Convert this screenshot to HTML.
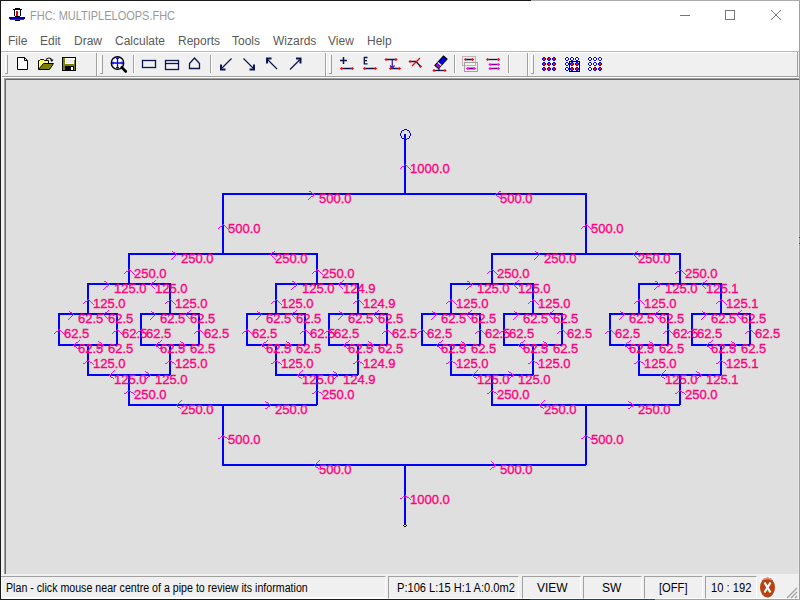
<!DOCTYPE html>
<html><head><meta charset="utf-8">
<style>
html,body{margin:0;padding:0;}
body{width:800px;height:600px;overflow:hidden;position:relative;background:#f0f0f0;font-family:"Liberation Sans",sans-serif;}
.abs{position:absolute;}
.r{position:absolute;}
#title{left:1px;top:1px;width:798px;height:29px;background:#fff;}
#title .t{position:absolute;left:29px;top:8px;font-size:12px;color:#9a9a9a;white-space:nowrap;transform:scaleX(0.915);transform-origin:0 0;}
#menu{left:1px;top:30px;width:798px;height:21px;background:#fff;}
#menu span{position:absolute;top:4px;font-size:12px;color:#5a5a5a;white-space:nowrap;}
#canvas{left:6px;top:80px;width:792px;height:494px;background:#dfdfdf;}
.st{position:absolute;font-size:12px;color:#000;white-space:nowrap;top:581px;transform-origin:0 0;}
</style></head><body>
<!-- window borders -->
<div class="r" style="left:0;top:0;width:531px;height:1px;background:#1a1a1a"></div>
<div class="r" style="left:531px;top:0;width:269px;height:1px;background:#aaaaaa"></div>
<div class="r" style="left:0;top:0;width:1px;height:600px;background:#1a1a1a"></div>
<div class="r" style="left:799px;top:1px;width:1px;height:599px;background:#a0a0a0"></div>

<div id="title" class="r">
  <svg class="abs" style="left:-1px;top:-1px" width="30" height="30" viewBox="0 0 30 30" shape-rendering="crispEdges">
    <rect x="15" y="8" width="5" height="1" fill="#000"/>
    <rect x="13" y="9" width="9" height="1" fill="#000"/>
    <rect x="14" y="10" width="7" height="6" fill="#fff"/>
    <rect x="14" y="10" width="1" height="6" fill="#000"/>
    <rect x="20" y="10" width="1" height="6" fill="#000"/>
    <rect x="16" y="11" width="2" height="5" fill="#e00000"/>
    <rect x="15" y="16" width="5" height="1" fill="#000"/>
    <rect x="9" y="17" width="16" height="2" fill="#0000c0"/>
    <rect x="10" y="19" width="14" height="1" fill="#3030c0"/>
    <rect x="15" y="20" width="5" height="1" fill="#000"/>
  </svg>
  <div class="t">FHC: MULTIPLELOOPS.FHC</div>
  <svg class="abs" style="left:670px;top:0" width="128" height="29" viewBox="671 1 128 29">
    <rect x="680" y="15" width="10" height="1" fill="#767676"/>
    <rect x="725.5" y="10.5" width="9" height="9" fill="none" stroke="#767676" stroke-width="1"/>
    <path d="M771 10L781 20M781 10L771 20" stroke="#767676" stroke-width="1"/>
  </svg>
</div>

<div id="menu" class="r">
  <span style="left:7px">File</span>
  <span style="left:39px">Edit</span>
  <span style="left:73px">Draw</span>
  <span style="left:114px">Calculate</span>
  <span style="left:177px">Reports</span>
  <span style="left:231px">Tools</span>
  <span style="left:272px">Wizards</span>
  <span style="left:327px">View</span>
  <span style="left:366px">Help</span>
</div>

<!-- toolbar band -->
<div class="r" style="left:1px;top:51px;width:798px;height:1px;background:#b9b9b9"></div>
<div class="r" style="left:1px;top:52px;width:798px;height:1px;background:#ffffff"></div>
<div class="r" style="left:1px;top:53px;width:798px;height:23px;background:#f0f0f0"></div>
<div class="r" style="left:1px;top:76px;width:798px;height:1px;background:#a0a0a0"></div>
<div class="r" style="left:1px;top:77px;width:798px;height:1px;background:#ffffff"></div>
<div class="r" style="left:1px;top:52px;width:1px;height:25px;background:#ffffff"></div>
<div class="r" style="left:797px;top:52px;width:1px;height:25px;background:#a0a0a0"></div>

<svg class="abs" style="left:0;top:50px" width="800" height="28" viewBox="0 50 800 28" shape-rendering="crispEdges">
  <g fill="#a0a0a0">
    <rect x="7" y="55" width="1" height="19"/><rect x="5" y="73" width="3" height="1"/>
    <rect x="96" y="53" width="1" height="23"/>
    <rect x="102" y="55" width="1" height="19"/><rect x="100" y="73" width="3" height="1"/>
    <rect x="133" y="55" width="1" height="18"/>
    <rect x="210" y="55" width="1" height="18"/>
    <rect x="325" y="53" width="1" height="23"/>
    <rect x="331" y="55" width="1" height="19"/><rect x="329" y="73" width="3" height="1"/>
    <rect x="454" y="55" width="1" height="18"/>
    <rect x="508" y="55" width="1" height="18"/>
    <rect x="527" y="53" width="1" height="23"/>
    <rect x="533" y="55" width="1" height="19"/><rect x="531" y="73" width="3" height="1"/>
  </g>
  <g fill="#ffffff">
    <rect x="5" y="55" width="1" height="18"/>
    <rect x="97" y="53" width="1" height="23"/>
    <rect x="100" y="55" width="1" height="18"/>
    <rect x="134" y="55" width="1" height="18"/>
    <rect x="211" y="55" width="1" height="18"/>
    <rect x="326" y="53" width="1" height="23"/>
    <rect x="329" y="55" width="1" height="18"/>
    <rect x="455" y="55" width="1" height="18"/>
    <rect x="509" y="55" width="1" height="18"/>
    <rect x="528" y="53" width="1" height="23"/>
    <rect x="531" y="55" width="1" height="18"/>
  </g>
</svg>
<svg class="abs" style="left:0;top:50px" width="800" height="28" viewBox="0 50 800 28">
  <!-- new -->
  <path d="M17.5 57.5h7l3 3v9h-10z" fill="#fff" stroke="#000"/>
  <path d="M24.5 57.5v3h3" fill="none" stroke="#000"/>
  <!-- open -->
  <path d="M38.5 69.5v-9h1l1-1h3l1 1h4v3" fill="#ffff60" stroke="#000"/>
  <path d="M38.5 69.5l5-6h10l-4 6z" fill="#808000" stroke="#000"/>
  <path d="M46 59.5q3-3 5.5 0" fill="none" stroke="#000" stroke-width="1.2"/>
  <path d="M50 59.5h3.5l-1.7 2.5z" fill="#000"/>
  <!-- save -->
  <rect x="62.5" y="57.5" width="13" height="13" fill="#808000" stroke="#000"/>
  <rect x="65" y="58" width="9" height="6" fill="#fff"/>
  <rect x="66" y="59" width="7" height="4" fill="#ececec"/>
  <rect x="65" y="66" width="9" height="4" fill="#000"/>
  <rect x="71" y="67" width="2" height="3" fill="#fff"/>
  <rect x="74" y="58" width="1" height="2" fill="#fff"/>
  <!-- zoom -->
  <circle cx="117.5" cy="63" r="6.2" fill="#fff" stroke="#000" stroke-width="1.4"/>
  <path d="M117.5 57.5v11M112 63h11" stroke="#0000e0" stroke-width="1.3"/>
  <path d="M116 58.5h3M116 67.5h3M113 61.5v3M122 61.5v3" stroke="#0000e0" stroke-width="1"/>
  <path d="M121.8 67.3l4 4.2" stroke="#000" stroke-width="2.6" stroke-linecap="round"/>
  <!-- rects / house -->
  <g fill="none" stroke="#0a1650" stroke-width="1.3">
    <rect x="142.5" y="60.5" width="13" height="7"/>
    <rect x="165.5" y="60.5" width="13" height="9"/>
    <path d="M165.5 63.5h13"/>
    <path d="M189.5 68.5v-5l5-5.5 5 5.5v5z"/>
  </g>
  <!-- diagonal arrows -->
  <g stroke="#0a1650" stroke-width="1.2" fill="none">
    <path d="M231.5 58.5L221 69M243.5 58.5L254 69M266.5 58.5L277 69M290 69.5L301 58.5"/>
  </g>
  <g stroke="#0a1650" stroke-width="2" fill="none">
    <path d="M221 64.5v5h4.5M254 64.5v5h-4.5M267 63.5v-5h4.5M300.5 63.5v-5h-4.5"/>
  </g>
  <!-- plus / E -->
  <path d="M343.5 57v7M340 60.5h7" stroke="#0a1650" stroke-width="1.5"/>
  <path d="M341 68.5h11M364 68.5h11" stroke="#0a1650" stroke-width="1.3"/>
  <path d="M364 57.5h3.5M364 60.7h3M364 63.8h3.5M364.3 57v7.5" stroke="#0a1650" stroke-width="1.3" fill="none"/>
  <path d="M341.5 66.9l1.6 1.6-1.6 1.6-1.6-1.6z" fill="#ff0000"/><path d="M352.5 66.9l1.6 1.6-1.6 1.6-1.6-1.6z" fill="#ff0000"/><path d="M364.5 66.9l1.6 1.6-1.6 1.6-1.6-1.6z" fill="#ff0000"/><path d="M375.5 66.9l1.6 1.6-1.6 1.6-1.6-1.6z" fill="#ff0000"/>
  <!-- T icon -->
  <path d="M386 59.5h10M390.5 68.5h9" stroke="#0a1650" stroke-width="1.3"/>
  <path d="M392.3 60v8M390 65.5l2.3 2.5 2.3-2.5" stroke="#5020a0" stroke-width="1.3" fill="none"/>
  <path d="M386 57.9l1.6 1.6-1.6 1.6-1.6-1.6z" fill="#ff0000"/><path d="M396 57.9l1.6 1.6-1.6 1.6-1.6-1.6z" fill="#ff0000"/><path d="M390.5 66.9l1.6 1.6-1.6 1.6-1.6-1.6z" fill="#ff0000"/><path d="M399.5 66.9l1.6 1.6-1.6 1.6-1.6-1.6z" fill="#ff0000"/>
  <!-- X line -->
  <path d="M410 61.5h6l4.5 5" stroke="#0a1650" stroke-width="1.3" fill="none"/>
  <path d="M412 66l8-8" stroke="#ff0000" stroke-width="1.2"/>
  <path d="M410 59.9l1.6 1.6-1.6 1.6-1.6-1.6z" fill="#ff0000"/><path d="M420.5 64.9l1.6 1.6-1.6 1.6-1.6-1.6z" fill="#ff0000"/>
  <!-- eraser -->
  <path d="M435 65.5l8.5-9.5 3.5 3-8.5 9.5z" fill="#0000ff" stroke="#000" stroke-width="1.2"/>
  <path d="M437.8 62.5l3.5 3" stroke="#e8e8e8" stroke-width="1.6"/>
  <path d="M435.6 65.3l1.6-1.8 3.2 2.9-1.6 1.8z" fill="#c000c0"/>
  <path d="M439 68.5v2" stroke="#000" stroke-width="1.2"/>
  <path d="M434 70.5h11" stroke="#0a1650" stroke-width="1.3"/>
  <path d="M434 68.9l1.6 1.6-1.6 1.6-1.6-1.6z" fill="#ff0000"/><path d="M445 68.9l1.6 1.6-1.6 1.6-1.6-1.6z" fill="#ff0000"/>
  <!-- two rect icon -->
  <rect x="462.5" y="56.5" width="13" height="9" fill="none" stroke="#a07080" stroke-width="1" stroke-dasharray="1 1"/>
  <rect x="464.5" y="62.5" width="13" height="9" fill="none" stroke="#a0a0a0" stroke-width="1"/>
  <path d="M466 59.5h6M468 68.5h6" stroke="#0a1650" stroke-width="1.3"/>
  <path d="M468 68.5h6" stroke="#800080" stroke-width="1.3"/>
  <path d="M465.5 57.9l1.6 1.6-1.6 1.6-1.6-1.6z" fill="#ff0000"/><path d="M472.5 57.9l1.6 1.6-1.6 1.6-1.6-1.6z" fill="#ff0000"/><path d="M467.5 66.9l1.6 1.6-1.6 1.6-1.6-1.6z" fill="#ff00ff"/><path d="M474.5 66.9l1.6 1.6-1.6 1.6-1.6-1.6z" fill="#ff00ff"/>
  <!-- lines icon -->
  <path d="M488 59.5h10" stroke="#0a1650" stroke-width="1.3"/>
  <path d="M490 64.5h8M490 68.5h8" stroke="#800080" stroke-width="1.3"/>
  <path d="M487.5 57.9l1.6 1.6-1.6 1.6-1.6-1.6z" fill="#ff0000"/><path d="M498.5 57.9l1.6 1.6-1.6 1.6-1.6-1.6z" fill="#ff0000"/><path d="M490 62.9l1.6 1.6-1.6 1.6-1.6-1.6z" fill="#ff00ff"/><path d="M498.5 62.9l1.6 1.6-1.6 1.6-1.6-1.6z" fill="#ff00ff"/><path d="M490 66.9l1.6 1.6-1.6 1.6-1.6-1.6z" fill="#ff00ff"/><path d="M498.5 66.9l1.6 1.6-1.6 1.6-1.6-1.6z" fill="#ff00ff"/>
</svg>
<svg class="abs" style="left:0;top:50px" width="800" height="28" viewBox="0 50 800 28" shape-rendering="crispEdges">
  <path d="M543 57h2v1h1v2h-1v1h-2v-1h-1v-2h1z" fill="#0000ff"/><rect x="543" y="58" width="2" height="2" fill="#ff0000"/><path d="M548 57h2v1h1v2h-1v1h-2v-1h-1v-2h1z" fill="#0000ff"/><rect x="548" y="58" width="2" height="2" fill="#ff0000"/><path d="M553 57h2v1h1v2h-1v1h-2v-1h-1v-2h1z" fill="#0000ff"/><rect x="553" y="58" width="2" height="2" fill="#ff0000"/><path d="M543 62h2v1h1v2h-1v1h-2v-1h-1v-2h1z" fill="#0000ff"/><rect x="543" y="63" width="2" height="2" fill="#ff0000"/><path d="M548 62h2v1h1v2h-1v1h-2v-1h-1v-2h1z" fill="#0000ff"/><rect x="548" y="63" width="2" height="2" fill="#ff0000"/><path d="M553 62h2v1h1v2h-1v1h-2v-1h-1v-2h1z" fill="#0000ff"/><rect x="553" y="63" width="2" height="2" fill="#ff0000"/><path d="M543 67h2v1h1v2h-1v1h-2v-1h-1v-2h1z" fill="#0000ff"/><rect x="543" y="68" width="2" height="2" fill="#ff0000"/><path d="M548 67h2v1h1v2h-1v1h-2v-1h-1v-2h1z" fill="#0000ff"/><rect x="548" y="68" width="2" height="2" fill="#ff0000"/><path d="M553 67h2v1h1v2h-1v1h-2v-1h-1v-2h1z" fill="#0000ff"/><rect x="553" y="68" width="2" height="2" fill="#ff0000"/>
  <path d="M566 57h2v1h1v2h-1v1h-2v-1h-1v-2h1z" fill="#0000ff"/><rect x="566" y="58" width="2" height="2" fill="#ffffff"/><path d="M571 57h2v1h1v2h-1v1h-2v-1h-1v-2h1z" fill="#0000ff"/><rect x="571" y="58" width="2" height="2" fill="#ffffff"/><path d="M576 57h2v1h1v2h-1v1h-2v-1h-1v-2h1z" fill="#0000ff"/><rect x="576" y="58" width="2" height="2" fill="#ffffff"/><path d="M566 62h2v1h1v2h-1v1h-2v-1h-1v-2h1z" fill="#0000ff"/><rect x="566" y="63" width="2" height="2" fill="#ffffff"/><path d="M571 62h2v1h1v2h-1v1h-2v-1h-1v-2h1z" fill="#0000ff"/><rect x="571" y="63" width="2" height="2" fill="#ff0000"/><path d="M576 62h2v1h1v2h-1v1h-2v-1h-1v-2h1z" fill="#0000ff"/><rect x="576" y="63" width="2" height="2" fill="#ff0000"/><path d="M566 67h2v1h1v2h-1v1h-2v-1h-1v-2h1z" fill="#0000ff"/><rect x="566" y="68" width="2" height="2" fill="#ffffff"/><path d="M571 67h2v1h1v2h-1v1h-2v-1h-1v-2h1z" fill="#0000ff"/><rect x="571" y="68" width="2" height="2" fill="#ff0000"/><path d="M576 67h2v1h1v2h-1v1h-2v-1h-1v-2h1z" fill="#0000ff"/><rect x="576" y="68" width="2" height="2" fill="#ff0000"/>
  <rect x="569.5" y="61.5" width="10" height="10" fill="none" stroke="#000" stroke-width="1.4"/>
  <path d="M589 57h2v1h1v2h-1v1h-2v-1h-1v-2h1z" fill="#0000ff"/><rect x="589" y="58" width="2" height="2" fill="#ffffff"/><path d="M594 57h2v1h1v2h-1v1h-2v-1h-1v-2h1z" fill="#0000ff"/><rect x="594" y="58" width="2" height="2" fill="#ffffff"/><path d="M599 57h2v1h1v2h-1v1h-2v-1h-1v-2h1z" fill="#0000ff"/><rect x="599" y="58" width="2" height="2" fill="#ffffff"/><path d="M589 62h2v1h1v2h-1v1h-2v-1h-1v-2h1z" fill="#0000ff"/><rect x="589" y="63" width="2" height="2" fill="#ffffff"/><path d="M594 62h2v1h1v2h-1v1h-2v-1h-1v-2h1z" fill="#0000ff"/><rect x="594" y="63" width="2" height="2" fill="#ffffff"/><path d="M599 62h2v1h1v2h-1v1h-2v-1h-1v-2h1z" fill="#0000ff"/><rect x="599" y="63" width="2" height="2" fill="#ff0000"/><path d="M589 67h2v1h1v2h-1v1h-2v-1h-1v-2h1z" fill="#0000ff"/><rect x="589" y="68" width="2" height="2" fill="#ffffff"/><path d="M594 67h2v1h1v2h-1v1h-2v-1h-1v-2h1z" fill="#0000ff"/><rect x="594" y="68" width="2" height="2" fill="#ff0000"/><path d="M599 67h2v1h1v2h-1v1h-2v-1h-1v-2h1z" fill="#0000ff"/><rect x="599" y="68" width="2" height="2" fill="#ff0000"/>
</svg>

<!-- canvas frame -->
<div class="r" style="left:4px;top:78px;width:795px;height:1px;background:#a0a0a0"></div>
<div class="r" style="left:4px;top:78px;width:1px;height:497px;background:#a0a0a0"></div>
<div class="r" style="left:5px;top:79px;width:794px;height:1px;background:#696969"></div>
<div class="r" style="left:5px;top:79px;width:1px;height:495px;background:#696969"></div>
<div id="canvas" class="r"></div>
<div class="r" style="left:798px;top:80px;width:1px;height:494px;background:#e8e8e8"></div><div class="r" style="left:799px;top:237px;width:1px;height:1px;background:#2a4a70"></div><div class="r" style="left:799px;top:243px;width:1px;height:1px;background:#2a4a70"></div>

<svg class="abs" style="left:0;top:0" width="800" height="600" viewBox="0 0 800 600"><g fill="#0000ff"><rect x="404" y="134" width="2" height="60"/><rect x="222" y="193" width="364" height="2"/><rect x="222" y="193" width="2" height="61"/><rect x="585" y="193" width="2" height="61"/><rect x="128" y="253" width="189" height="2"/><rect x="491" y="253" width="189" height="2"/><rect x="404" y="464" width="2" height="61"/><rect x="222" y="464" width="364" height="2"/><rect x="222" y="404" width="2" height="61"/><rect x="585" y="404" width="2" height="61"/><rect x="128" y="404" width="189" height="2"/><rect x="491" y="404" width="189" height="2"/><rect x="128" y="253" width="2" height="31"/><rect x="128" y="374" width="2" height="31"/><rect x="87" y="283" width="83" height="2"/><rect x="87" y="374" width="83" height="2"/><rect x="87" y="283" width="2" height="31"/><rect x="87" y="344" width="2" height="31"/><rect x="58" y="313" width="59" height="2"/><rect x="58" y="344" width="59" height="2"/><rect x="58" y="313" width="2" height="32"/><rect x="116" y="313" width="2" height="32"/><rect x="169" y="283" width="2" height="31"/><rect x="169" y="344" width="2" height="31"/><rect x="140" y="313" width="59" height="2"/><rect x="140" y="344" width="59" height="2"/><rect x="140" y="313" width="2" height="32"/><rect x="198" y="313" width="2" height="32"/><rect x="316" y="253" width="2" height="31"/><rect x="316" y="374" width="2" height="31"/><rect x="275" y="283" width="83" height="2"/><rect x="275" y="374" width="83" height="2"/><rect x="275" y="283" width="2" height="31"/><rect x="275" y="344" width="2" height="31"/><rect x="246" y="313" width="59" height="2"/><rect x="246" y="344" width="59" height="2"/><rect x="246" y="313" width="2" height="32"/><rect x="304" y="313" width="2" height="32"/><rect x="357" y="283" width="2" height="31"/><rect x="357" y="344" width="2" height="31"/><rect x="328" y="313" width="59" height="2"/><rect x="328" y="344" width="59" height="2"/><rect x="328" y="313" width="2" height="32"/><rect x="386" y="313" width="2" height="32"/><rect x="491" y="253" width="2" height="31"/><rect x="491" y="374" width="2" height="31"/><rect x="450" y="283" width="83" height="2"/><rect x="450" y="374" width="83" height="2"/><rect x="450" y="283" width="2" height="31"/><rect x="450" y="344" width="2" height="31"/><rect x="421" y="313" width="59" height="2"/><rect x="421" y="344" width="59" height="2"/><rect x="421" y="313" width="2" height="32"/><rect x="479" y="313" width="2" height="32"/><rect x="532" y="283" width="2" height="31"/><rect x="532" y="344" width="2" height="31"/><rect x="503" y="313" width="59" height="2"/><rect x="503" y="344" width="59" height="2"/><rect x="503" y="313" width="2" height="32"/><rect x="561" y="313" width="2" height="32"/><rect x="679" y="253" width="2" height="31"/><rect x="679" y="374" width="2" height="31"/><rect x="638" y="283" width="83" height="2"/><rect x="638" y="374" width="83" height="2"/><rect x="638" y="283" width="2" height="31"/><rect x="638" y="344" width="2" height="31"/><rect x="609" y="313" width="59" height="2"/><rect x="609" y="344" width="59" height="2"/><rect x="609" y="313" width="2" height="32"/><rect x="667" y="313" width="2" height="32"/><rect x="720" y="283" width="2" height="31"/><rect x="720" y="344" width="2" height="31"/><rect x="691" y="313" width="59" height="2"/><rect x="691" y="344" width="59" height="2"/><rect x="691" y="313" width="2" height="32"/><rect x="749" y="313" width="2" height="32"/></g><path fill="#0000ff" d="M404 129h1v1h-1zM405 129h1v1h-1zM406 129h1v1h-1zM402 130h1v1h-1zM403 130h1v1h-1zM407 130h1v1h-1zM408 130h1v1h-1zM401 131h1v1h-1zM409 131h1v1h-1zM401 132h1v1h-1zM409 132h1v1h-1zM400 133h1v1h-1zM410 133h1v1h-1zM400 134h1v1h-1zM410 134h1v1h-1zM400 135h1v1h-1zM410 135h1v1h-1zM401 136h1v1h-1zM409 136h1v1h-1zM401 137h1v1h-1zM409 137h1v1h-1zM402 138h1v1h-1zM403 138h1v1h-1zM407 138h1v1h-1zM408 138h1v1h-1zM404 139h1v1h-1zM405 139h1v1h-1zM406 139h1v1h-1z"/><path fill="#000" d="M404 524h2v1h-2zM403 525h1v1h-1zM406 525h1v1h-1zM404 526h2v1h-2z"/><path fill="#ff00ff" d="M405 164h1v1h-1zM404 165h1v1h-1zM406 165h1v1h-1zM402 166h1v1h-1zM403 166h1v1h-1zM407 166h1v1h-1zM401 167h1v1h-1zM408 167h1v1h-1zM400 168h1v1h-1zM409 168h1v1h-1zM410 169h1v1h-1zM309 191h1v1h-1zM310 191h1v1h-1zM311 192h1v1h-1zM312 193h1v1h-1zM313 193h1v1h-1zM314 194h1v1h-1zM313 195h1v1h-1zM311 196h1v1h-1zM312 196h1v1h-1zM310 197h1v1h-1zM309 198h1v1h-1zM308 199h1v1h-1zM500 191h1v1h-1zM499 191h1v1h-1zM498 192h1v1h-1zM497 193h1v1h-1zM496 193h1v1h-1zM495 194h1v1h-1zM496 195h1v1h-1zM498 196h1v1h-1zM497 196h1v1h-1zM499 197h1v1h-1zM500 198h1v1h-1zM501 199h1v1h-1zM223 224h1v1h-1zM222 225h1v1h-1zM224 225h1v1h-1zM220 226h1v1h-1zM221 226h1v1h-1zM225 226h1v1h-1zM219 227h1v1h-1zM226 227h1v1h-1zM218 228h1v1h-1zM227 228h1v1h-1zM228 229h1v1h-1zM586 224h1v1h-1zM585 225h1v1h-1zM587 225h1v1h-1zM583 226h1v1h-1zM584 226h1v1h-1zM588 226h1v1h-1zM582 227h1v1h-1zM589 227h1v1h-1zM581 228h1v1h-1zM590 228h1v1h-1zM591 229h1v1h-1zM172 251h1v1h-1zM173 252h1v1h-1zM174 252h1v1h-1zM175 253h1v1h-1zM176 254h1v1h-1zM175 255h1v1h-1zM174 256h1v1h-1zM173 257h1v1h-1zM172 258h1v1h-1zM171 259h1v1h-1zM274 251h1v1h-1zM272 252h1v1h-1zM273 252h1v1h-1zM271 253h1v1h-1zM270 254h1v1h-1zM271 255h1v1h-1zM272 256h1v1h-1zM273 257h1v1h-1zM274 258h1v1h-1zM275 259h1v1h-1zM535 251h1v1h-1zM536 252h1v1h-1zM537 252h1v1h-1zM538 253h1v1h-1zM539 254h1v1h-1zM538 255h1v1h-1zM537 256h1v1h-1zM536 257h1v1h-1zM535 258h1v1h-1zM534 259h1v1h-1zM637 251h1v1h-1zM635 252h1v1h-1zM636 252h1v1h-1zM634 253h1v1h-1zM633 254h1v1h-1zM634 255h1v1h-1zM635 256h1v1h-1zM636 257h1v1h-1zM637 258h1v1h-1zM638 259h1v1h-1zM405 495h1v1h-1zM403 496h1v1h-1zM404 496h1v1h-1zM406 496h1v1h-1zM402 497h1v1h-1zM407 497h1v1h-1zM408 497h1v1h-1zM400 498h1v1h-1zM401 498h1v1h-1zM409 498h1v1h-1zM410 499h1v1h-1zM314 465h1v1h-1zM315 464h1v1h-1zM316 463h1v1h-1zM317 462h1v1h-1zM318 461h1v1h-1zM319 460h1v1h-1zM315 466h1v1h-1zM316 467h1v1h-1zM317 467h1v1h-1zM318 468h1v1h-1zM491 461h1v1h-1zM492 462h1v1h-1zM493 463h1v1h-1zM494 464h1v1h-1zM495 465h1v1h-1zM494 466h1v1h-1zM492 467h1v1h-1zM493 467h1v1h-1zM491 468h1v1h-1zM490 469h1v1h-1zM223 435h1v1h-1zM221 436h1v1h-1zM222 436h1v1h-1zM224 436h1v1h-1zM220 437h1v1h-1zM225 437h1v1h-1zM226 437h1v1h-1zM218 438h1v1h-1zM219 438h1v1h-1zM227 438h1v1h-1zM228 439h1v1h-1zM586 435h1v1h-1zM584 436h1v1h-1zM585 436h1v1h-1zM587 436h1v1h-1zM583 437h1v1h-1zM588 437h1v1h-1zM589 437h1v1h-1zM581 438h1v1h-1zM582 438h1v1h-1zM590 438h1v1h-1zM591 439h1v1h-1zM176 405h1v1h-1zM177 404h1v1h-1zM178 403h1v1h-1zM179 402h1v1h-1zM180 401h1v1h-1zM181 400h1v1h-1zM177 406h1v1h-1zM178 407h1v1h-1zM179 407h1v1h-1zM180 408h1v1h-1zM270 405h1v1h-1zM269 404h1v1h-1zM268 403h1v1h-1zM267 402h1v1h-1zM266 402h1v1h-1zM265 401h1v1h-1zM269 406h1v1h-1zM268 406h1v1h-1zM267 407h1v1h-1zM266 408h1v1h-1zM265 408h1v1h-1zM539 405h1v1h-1zM540 404h1v1h-1zM541 403h1v1h-1zM542 402h1v1h-1zM543 401h1v1h-1zM544 400h1v1h-1zM540 406h1v1h-1zM541 407h1v1h-1zM542 407h1v1h-1zM543 408h1v1h-1zM633 405h1v1h-1zM632 404h1v1h-1zM631 403h1v1h-1zM630 402h1v1h-1zM629 402h1v1h-1zM628 401h1v1h-1zM632 406h1v1h-1zM631 406h1v1h-1zM630 407h1v1h-1zM629 408h1v1h-1zM628 408h1v1h-1zM129 269h1v1h-1zM128 270h1v1h-1zM130 270h1v1h-1zM126 271h1v1h-1zM127 271h1v1h-1zM131 271h1v1h-1zM125 272h1v1h-1zM132 272h1v1h-1zM124 273h1v1h-1zM133 273h1v1h-1zM134 274h1v1h-1zM129 390h1v1h-1zM127 391h1v1h-1zM128 391h1v1h-1zM130 391h1v1h-1zM126 392h1v1h-1zM131 392h1v1h-1zM132 392h1v1h-1zM124 393h1v1h-1zM125 393h1v1h-1zM133 393h1v1h-1zM134 394h1v1h-1zM104 281h1v1h-1zM105 281h1v1h-1zM106 282h1v1h-1zM107 283h1v1h-1zM108 283h1v1h-1zM109 284h1v1h-1zM108 285h1v1h-1zM106 286h1v1h-1zM107 286h1v1h-1zM105 287h1v1h-1zM104 288h1v1h-1zM103 289h1v1h-1zM150 284h1v1h-1zM151 283h1v1h-1zM152 282h1v1h-1zM153 282h1v1h-1zM154 281h1v1h-1zM155 280h1v1h-1zM151 285h1v1h-1zM152 286h1v1h-1zM153 287h1v1h-1zM154 288h1v1h-1zM109 375h1v1h-1zM110 374h1v1h-1zM111 373h1v1h-1zM112 372h1v1h-1zM113 371h1v1h-1zM114 370h1v1h-1zM110 376h1v1h-1zM111 377h1v1h-1zM112 377h1v1h-1zM113 378h1v1h-1zM150 375h1v1h-1zM149 374h1v1h-1zM148 373h1v1h-1zM147 372h1v1h-1zM146 372h1v1h-1zM145 371h1v1h-1zM149 376h1v1h-1zM148 376h1v1h-1zM147 377h1v1h-1zM146 378h1v1h-1zM145 378h1v1h-1zM88 299h1v1h-1zM87 300h1v1h-1zM89 300h1v1h-1zM85 301h1v1h-1zM86 301h1v1h-1zM90 301h1v1h-1zM84 302h1v1h-1zM91 302h1v1h-1zM83 303h1v1h-1zM92 303h1v1h-1zM93 304h1v1h-1zM88 360h1v1h-1zM86 361h1v1h-1zM87 361h1v1h-1zM89 361h1v1h-1zM85 362h1v1h-1zM90 362h1v1h-1zM91 362h1v1h-1zM83 363h1v1h-1zM84 363h1v1h-1zM92 363h1v1h-1zM93 364h1v1h-1zM69 311h1v1h-1zM70 312h1v1h-1zM71 312h1v1h-1zM72 313h1v1h-1zM73 314h1v1h-1zM72 315h1v1h-1zM71 316h1v1h-1zM70 317h1v1h-1zM69 318h1v1h-1zM68 319h1v1h-1zM103 314h1v1h-1zM104 313h1v1h-1zM105 312h1v1h-1zM106 312h1v1h-1zM107 311h1v1h-1zM108 310h1v1h-1zM104 315h1v1h-1zM105 316h1v1h-1zM106 317h1v1h-1zM107 318h1v1h-1zM74 344h1v1h-1zM75 343h1v1h-1zM76 342h1v1h-1zM77 342h1v1h-1zM78 341h1v1h-1zM79 340h1v1h-1zM73 345h1v1h-1zM74 346h1v1h-1zM75 346h1v1h-1zM76 347h1v1h-1zM77 348h1v1h-1zM78 348h1v1h-1zM103 345h1v1h-1zM102 344h1v1h-1zM101 343h1v1h-1zM100 342h1v1h-1zM99 342h1v1h-1zM98 341h1v1h-1zM102 346h1v1h-1zM101 346h1v1h-1zM100 347h1v1h-1zM99 348h1v1h-1zM98 348h1v1h-1zM59 329h1v1h-1zM58 330h1v1h-1zM60 330h1v1h-1zM56 331h1v1h-1zM57 331h1v1h-1zM61 331h1v1h-1zM55 332h1v1h-1zM62 332h1v1h-1zM54 333h1v1h-1zM63 333h1v1h-1zM64 334h1v1h-1zM117 329h1v1h-1zM116 330h1v1h-1zM118 330h1v1h-1zM114 331h1v1h-1zM115 331h1v1h-1zM119 331h1v1h-1zM113 332h1v1h-1zM120 332h1v1h-1zM112 333h1v1h-1zM121 333h1v1h-1zM122 334h1v1h-1zM170 299h1v1h-1zM169 300h1v1h-1zM171 300h1v1h-1zM167 301h1v1h-1zM168 301h1v1h-1zM172 301h1v1h-1zM166 302h1v1h-1zM173 302h1v1h-1zM165 303h1v1h-1zM174 303h1v1h-1zM175 304h1v1h-1zM170 360h1v1h-1zM168 361h1v1h-1zM169 361h1v1h-1zM171 361h1v1h-1zM167 362h1v1h-1zM172 362h1v1h-1zM173 362h1v1h-1zM165 363h1v1h-1zM166 363h1v1h-1zM174 363h1v1h-1zM175 364h1v1h-1zM151 311h1v1h-1zM152 312h1v1h-1zM153 312h1v1h-1zM154 313h1v1h-1zM155 314h1v1h-1zM154 315h1v1h-1zM153 316h1v1h-1zM152 317h1v1h-1zM151 318h1v1h-1zM150 319h1v1h-1zM185 314h1v1h-1zM186 313h1v1h-1zM187 312h1v1h-1zM188 312h1v1h-1zM189 311h1v1h-1zM190 310h1v1h-1zM186 315h1v1h-1zM187 316h1v1h-1zM188 317h1v1h-1zM189 318h1v1h-1zM156 344h1v1h-1zM157 343h1v1h-1zM158 342h1v1h-1zM159 342h1v1h-1zM160 341h1v1h-1zM161 340h1v1h-1zM155 345h1v1h-1zM156 346h1v1h-1zM157 346h1v1h-1zM158 347h1v1h-1zM159 348h1v1h-1zM160 348h1v1h-1zM185 345h1v1h-1zM184 344h1v1h-1zM183 343h1v1h-1zM182 342h1v1h-1zM181 342h1v1h-1zM180 341h1v1h-1zM184 346h1v1h-1zM183 346h1v1h-1zM182 347h1v1h-1zM181 348h1v1h-1zM180 348h1v1h-1zM141 329h1v1h-1zM140 330h1v1h-1zM142 330h1v1h-1zM138 331h1v1h-1zM139 331h1v1h-1zM143 331h1v1h-1zM137 332h1v1h-1zM144 332h1v1h-1zM136 333h1v1h-1zM145 333h1v1h-1zM146 334h1v1h-1zM199 329h1v1h-1zM198 330h1v1h-1zM200 330h1v1h-1zM196 331h1v1h-1zM197 331h1v1h-1zM201 331h1v1h-1zM195 332h1v1h-1zM202 332h1v1h-1zM194 333h1v1h-1zM203 333h1v1h-1zM204 334h1v1h-1zM317 269h1v1h-1zM316 270h1v1h-1zM318 270h1v1h-1zM314 271h1v1h-1zM315 271h1v1h-1zM319 271h1v1h-1zM313 272h1v1h-1zM320 272h1v1h-1zM312 273h1v1h-1zM321 273h1v1h-1zM322 274h1v1h-1zM317 390h1v1h-1zM315 391h1v1h-1zM316 391h1v1h-1zM318 391h1v1h-1zM314 392h1v1h-1zM319 392h1v1h-1zM320 392h1v1h-1zM312 393h1v1h-1zM313 393h1v1h-1zM321 393h1v1h-1zM322 394h1v1h-1zM292 281h1v1h-1zM293 281h1v1h-1zM294 282h1v1h-1zM295 283h1v1h-1zM296 283h1v1h-1zM297 284h1v1h-1zM296 285h1v1h-1zM294 286h1v1h-1zM295 286h1v1h-1zM293 287h1v1h-1zM292 288h1v1h-1zM291 289h1v1h-1zM338 284h1v1h-1zM339 283h1v1h-1zM340 282h1v1h-1zM341 282h1v1h-1zM342 281h1v1h-1zM343 280h1v1h-1zM339 285h1v1h-1zM340 286h1v1h-1zM341 287h1v1h-1zM342 288h1v1h-1zM297 375h1v1h-1zM298 374h1v1h-1zM299 373h1v1h-1zM300 372h1v1h-1zM301 371h1v1h-1zM302 370h1v1h-1zM298 376h1v1h-1zM299 377h1v1h-1zM300 377h1v1h-1zM301 378h1v1h-1zM338 375h1v1h-1zM337 374h1v1h-1zM336 373h1v1h-1zM335 372h1v1h-1zM334 372h1v1h-1zM333 371h1v1h-1zM337 376h1v1h-1zM336 376h1v1h-1zM335 377h1v1h-1zM334 378h1v1h-1zM333 378h1v1h-1zM276 299h1v1h-1zM275 300h1v1h-1zM277 300h1v1h-1zM273 301h1v1h-1zM274 301h1v1h-1zM278 301h1v1h-1zM272 302h1v1h-1zM279 302h1v1h-1zM271 303h1v1h-1zM280 303h1v1h-1zM281 304h1v1h-1zM276 360h1v1h-1zM274 361h1v1h-1zM275 361h1v1h-1zM277 361h1v1h-1zM273 362h1v1h-1zM278 362h1v1h-1zM279 362h1v1h-1zM271 363h1v1h-1zM272 363h1v1h-1zM280 363h1v1h-1zM281 364h1v1h-1zM257 311h1v1h-1zM258 312h1v1h-1zM259 312h1v1h-1zM260 313h1v1h-1zM261 314h1v1h-1zM260 315h1v1h-1zM259 316h1v1h-1zM258 317h1v1h-1zM257 318h1v1h-1zM256 319h1v1h-1zM291 314h1v1h-1zM292 313h1v1h-1zM293 312h1v1h-1zM294 312h1v1h-1zM295 311h1v1h-1zM296 310h1v1h-1zM292 315h1v1h-1zM293 316h1v1h-1zM294 317h1v1h-1zM295 318h1v1h-1zM262 344h1v1h-1zM263 343h1v1h-1zM264 342h1v1h-1zM265 342h1v1h-1zM266 341h1v1h-1zM267 340h1v1h-1zM261 345h1v1h-1zM262 346h1v1h-1zM263 346h1v1h-1zM264 347h1v1h-1zM265 348h1v1h-1zM266 348h1v1h-1zM291 345h1v1h-1zM290 344h1v1h-1zM289 343h1v1h-1zM288 342h1v1h-1zM287 342h1v1h-1zM286 341h1v1h-1zM290 346h1v1h-1zM289 346h1v1h-1zM288 347h1v1h-1zM287 348h1v1h-1zM286 348h1v1h-1zM247 329h1v1h-1zM246 330h1v1h-1zM248 330h1v1h-1zM244 331h1v1h-1zM245 331h1v1h-1zM249 331h1v1h-1zM243 332h1v1h-1zM250 332h1v1h-1zM242 333h1v1h-1zM251 333h1v1h-1zM252 334h1v1h-1zM305 329h1v1h-1zM304 330h1v1h-1zM306 330h1v1h-1zM302 331h1v1h-1zM303 331h1v1h-1zM307 331h1v1h-1zM301 332h1v1h-1zM308 332h1v1h-1zM300 333h1v1h-1zM309 333h1v1h-1zM310 334h1v1h-1zM358 299h1v1h-1zM357 300h1v1h-1zM359 300h1v1h-1zM355 301h1v1h-1zM356 301h1v1h-1zM360 301h1v1h-1zM354 302h1v1h-1zM361 302h1v1h-1zM353 303h1v1h-1zM362 303h1v1h-1zM363 304h1v1h-1zM358 360h1v1h-1zM356 361h1v1h-1zM357 361h1v1h-1zM359 361h1v1h-1zM355 362h1v1h-1zM360 362h1v1h-1zM361 362h1v1h-1zM353 363h1v1h-1zM354 363h1v1h-1zM362 363h1v1h-1zM363 364h1v1h-1zM339 311h1v1h-1zM340 312h1v1h-1zM341 312h1v1h-1zM342 313h1v1h-1zM343 314h1v1h-1zM342 315h1v1h-1zM341 316h1v1h-1zM340 317h1v1h-1zM339 318h1v1h-1zM338 319h1v1h-1zM373 314h1v1h-1zM374 313h1v1h-1zM375 312h1v1h-1zM376 312h1v1h-1zM377 311h1v1h-1zM378 310h1v1h-1zM374 315h1v1h-1zM375 316h1v1h-1zM376 317h1v1h-1zM377 318h1v1h-1zM344 344h1v1h-1zM345 343h1v1h-1zM346 342h1v1h-1zM347 342h1v1h-1zM348 341h1v1h-1zM349 340h1v1h-1zM343 345h1v1h-1zM344 346h1v1h-1zM345 346h1v1h-1zM346 347h1v1h-1zM347 348h1v1h-1zM348 348h1v1h-1zM373 345h1v1h-1zM372 344h1v1h-1zM371 343h1v1h-1zM370 342h1v1h-1zM369 342h1v1h-1zM368 341h1v1h-1zM372 346h1v1h-1zM371 346h1v1h-1zM370 347h1v1h-1zM369 348h1v1h-1zM368 348h1v1h-1zM329 329h1v1h-1zM328 330h1v1h-1zM330 330h1v1h-1zM326 331h1v1h-1zM327 331h1v1h-1zM331 331h1v1h-1zM325 332h1v1h-1zM332 332h1v1h-1zM324 333h1v1h-1zM333 333h1v1h-1zM334 334h1v1h-1zM387 329h1v1h-1zM386 330h1v1h-1zM388 330h1v1h-1zM384 331h1v1h-1zM385 331h1v1h-1zM389 331h1v1h-1zM383 332h1v1h-1zM390 332h1v1h-1zM382 333h1v1h-1zM391 333h1v1h-1zM392 334h1v1h-1zM492 269h1v1h-1zM491 270h1v1h-1zM493 270h1v1h-1zM489 271h1v1h-1zM490 271h1v1h-1zM494 271h1v1h-1zM488 272h1v1h-1zM495 272h1v1h-1zM487 273h1v1h-1zM496 273h1v1h-1zM497 274h1v1h-1zM492 390h1v1h-1zM490 391h1v1h-1zM491 391h1v1h-1zM493 391h1v1h-1zM489 392h1v1h-1zM494 392h1v1h-1zM495 392h1v1h-1zM487 393h1v1h-1zM488 393h1v1h-1zM496 393h1v1h-1zM497 394h1v1h-1zM467 281h1v1h-1zM468 281h1v1h-1zM469 282h1v1h-1zM470 283h1v1h-1zM471 283h1v1h-1zM472 284h1v1h-1zM471 285h1v1h-1zM469 286h1v1h-1zM470 286h1v1h-1zM468 287h1v1h-1zM467 288h1v1h-1zM466 289h1v1h-1zM513 284h1v1h-1zM514 283h1v1h-1zM515 282h1v1h-1zM516 282h1v1h-1zM517 281h1v1h-1zM518 280h1v1h-1zM514 285h1v1h-1zM515 286h1v1h-1zM516 287h1v1h-1zM517 288h1v1h-1zM472 375h1v1h-1zM473 374h1v1h-1zM474 373h1v1h-1zM475 372h1v1h-1zM476 371h1v1h-1zM477 370h1v1h-1zM473 376h1v1h-1zM474 377h1v1h-1zM475 377h1v1h-1zM476 378h1v1h-1zM513 375h1v1h-1zM512 374h1v1h-1zM511 373h1v1h-1zM510 372h1v1h-1zM509 372h1v1h-1zM508 371h1v1h-1zM512 376h1v1h-1zM511 376h1v1h-1zM510 377h1v1h-1zM509 378h1v1h-1zM508 378h1v1h-1zM451 299h1v1h-1zM450 300h1v1h-1zM452 300h1v1h-1zM448 301h1v1h-1zM449 301h1v1h-1zM453 301h1v1h-1zM447 302h1v1h-1zM454 302h1v1h-1zM446 303h1v1h-1zM455 303h1v1h-1zM456 304h1v1h-1zM451 360h1v1h-1zM449 361h1v1h-1zM450 361h1v1h-1zM452 361h1v1h-1zM448 362h1v1h-1zM453 362h1v1h-1zM454 362h1v1h-1zM446 363h1v1h-1zM447 363h1v1h-1zM455 363h1v1h-1zM456 364h1v1h-1zM432 311h1v1h-1zM433 312h1v1h-1zM434 312h1v1h-1zM435 313h1v1h-1zM436 314h1v1h-1zM435 315h1v1h-1zM434 316h1v1h-1zM433 317h1v1h-1zM432 318h1v1h-1zM431 319h1v1h-1zM466 314h1v1h-1zM467 313h1v1h-1zM468 312h1v1h-1zM469 312h1v1h-1zM470 311h1v1h-1zM471 310h1v1h-1zM467 315h1v1h-1zM468 316h1v1h-1zM469 317h1v1h-1zM470 318h1v1h-1zM437 344h1v1h-1zM438 343h1v1h-1zM439 342h1v1h-1zM440 342h1v1h-1zM441 341h1v1h-1zM442 340h1v1h-1zM436 345h1v1h-1zM437 346h1v1h-1zM438 346h1v1h-1zM439 347h1v1h-1zM440 348h1v1h-1zM441 348h1v1h-1zM466 345h1v1h-1zM465 344h1v1h-1zM464 343h1v1h-1zM463 342h1v1h-1zM462 342h1v1h-1zM461 341h1v1h-1zM465 346h1v1h-1zM464 346h1v1h-1zM463 347h1v1h-1zM462 348h1v1h-1zM461 348h1v1h-1zM422 329h1v1h-1zM421 330h1v1h-1zM423 330h1v1h-1zM419 331h1v1h-1zM420 331h1v1h-1zM424 331h1v1h-1zM418 332h1v1h-1zM425 332h1v1h-1zM417 333h1v1h-1zM426 333h1v1h-1zM427 334h1v1h-1zM480 329h1v1h-1zM479 330h1v1h-1zM481 330h1v1h-1zM477 331h1v1h-1zM478 331h1v1h-1zM482 331h1v1h-1zM476 332h1v1h-1zM483 332h1v1h-1zM475 333h1v1h-1zM484 333h1v1h-1zM485 334h1v1h-1zM533 299h1v1h-1zM532 300h1v1h-1zM534 300h1v1h-1zM530 301h1v1h-1zM531 301h1v1h-1zM535 301h1v1h-1zM529 302h1v1h-1zM536 302h1v1h-1zM528 303h1v1h-1zM537 303h1v1h-1zM538 304h1v1h-1zM533 360h1v1h-1zM531 361h1v1h-1zM532 361h1v1h-1zM534 361h1v1h-1zM530 362h1v1h-1zM535 362h1v1h-1zM536 362h1v1h-1zM528 363h1v1h-1zM529 363h1v1h-1zM537 363h1v1h-1zM538 364h1v1h-1zM514 311h1v1h-1zM515 312h1v1h-1zM516 312h1v1h-1zM517 313h1v1h-1zM518 314h1v1h-1zM517 315h1v1h-1zM516 316h1v1h-1zM515 317h1v1h-1zM514 318h1v1h-1zM513 319h1v1h-1zM548 314h1v1h-1zM549 313h1v1h-1zM550 312h1v1h-1zM551 312h1v1h-1zM552 311h1v1h-1zM553 310h1v1h-1zM549 315h1v1h-1zM550 316h1v1h-1zM551 317h1v1h-1zM552 318h1v1h-1zM519 344h1v1h-1zM520 343h1v1h-1zM521 342h1v1h-1zM522 342h1v1h-1zM523 341h1v1h-1zM524 340h1v1h-1zM518 345h1v1h-1zM519 346h1v1h-1zM520 346h1v1h-1zM521 347h1v1h-1zM522 348h1v1h-1zM523 348h1v1h-1zM548 345h1v1h-1zM547 344h1v1h-1zM546 343h1v1h-1zM545 342h1v1h-1zM544 342h1v1h-1zM543 341h1v1h-1zM547 346h1v1h-1zM546 346h1v1h-1zM545 347h1v1h-1zM544 348h1v1h-1zM543 348h1v1h-1zM504 329h1v1h-1zM503 330h1v1h-1zM505 330h1v1h-1zM501 331h1v1h-1zM502 331h1v1h-1zM506 331h1v1h-1zM500 332h1v1h-1zM507 332h1v1h-1zM499 333h1v1h-1zM508 333h1v1h-1zM509 334h1v1h-1zM562 329h1v1h-1zM561 330h1v1h-1zM563 330h1v1h-1zM559 331h1v1h-1zM560 331h1v1h-1zM564 331h1v1h-1zM558 332h1v1h-1zM565 332h1v1h-1zM557 333h1v1h-1zM566 333h1v1h-1zM567 334h1v1h-1zM680 269h1v1h-1zM679 270h1v1h-1zM681 270h1v1h-1zM677 271h1v1h-1zM678 271h1v1h-1zM682 271h1v1h-1zM676 272h1v1h-1zM683 272h1v1h-1zM675 273h1v1h-1zM684 273h1v1h-1zM685 274h1v1h-1zM680 390h1v1h-1zM678 391h1v1h-1zM679 391h1v1h-1zM681 391h1v1h-1zM677 392h1v1h-1zM682 392h1v1h-1zM683 392h1v1h-1zM675 393h1v1h-1zM676 393h1v1h-1zM684 393h1v1h-1zM685 394h1v1h-1zM655 281h1v1h-1zM656 281h1v1h-1zM657 282h1v1h-1zM658 283h1v1h-1zM659 283h1v1h-1zM660 284h1v1h-1zM659 285h1v1h-1zM657 286h1v1h-1zM658 286h1v1h-1zM656 287h1v1h-1zM655 288h1v1h-1zM654 289h1v1h-1zM701 284h1v1h-1zM702 283h1v1h-1zM703 282h1v1h-1zM704 282h1v1h-1zM705 281h1v1h-1zM706 280h1v1h-1zM702 285h1v1h-1zM703 286h1v1h-1zM704 287h1v1h-1zM705 288h1v1h-1zM660 375h1v1h-1zM661 374h1v1h-1zM662 373h1v1h-1zM663 372h1v1h-1zM664 371h1v1h-1zM665 370h1v1h-1zM661 376h1v1h-1zM662 377h1v1h-1zM663 377h1v1h-1zM664 378h1v1h-1zM701 375h1v1h-1zM700 374h1v1h-1zM699 373h1v1h-1zM698 372h1v1h-1zM697 372h1v1h-1zM696 371h1v1h-1zM700 376h1v1h-1zM699 376h1v1h-1zM698 377h1v1h-1zM697 378h1v1h-1zM696 378h1v1h-1zM639 299h1v1h-1zM638 300h1v1h-1zM640 300h1v1h-1zM636 301h1v1h-1zM637 301h1v1h-1zM641 301h1v1h-1zM635 302h1v1h-1zM642 302h1v1h-1zM634 303h1v1h-1zM643 303h1v1h-1zM644 304h1v1h-1zM639 360h1v1h-1zM637 361h1v1h-1zM638 361h1v1h-1zM640 361h1v1h-1zM636 362h1v1h-1zM641 362h1v1h-1zM642 362h1v1h-1zM634 363h1v1h-1zM635 363h1v1h-1zM643 363h1v1h-1zM644 364h1v1h-1zM620 311h1v1h-1zM621 312h1v1h-1zM622 312h1v1h-1zM623 313h1v1h-1zM624 314h1v1h-1zM623 315h1v1h-1zM622 316h1v1h-1zM621 317h1v1h-1zM620 318h1v1h-1zM619 319h1v1h-1zM654 314h1v1h-1zM655 313h1v1h-1zM656 312h1v1h-1zM657 312h1v1h-1zM658 311h1v1h-1zM659 310h1v1h-1zM655 315h1v1h-1zM656 316h1v1h-1zM657 317h1v1h-1zM658 318h1v1h-1zM625 344h1v1h-1zM626 343h1v1h-1zM627 342h1v1h-1zM628 342h1v1h-1zM629 341h1v1h-1zM630 340h1v1h-1zM624 345h1v1h-1zM625 346h1v1h-1zM626 346h1v1h-1zM627 347h1v1h-1zM628 348h1v1h-1zM629 348h1v1h-1zM654 345h1v1h-1zM653 344h1v1h-1zM652 343h1v1h-1zM651 342h1v1h-1zM650 342h1v1h-1zM649 341h1v1h-1zM653 346h1v1h-1zM652 346h1v1h-1zM651 347h1v1h-1zM650 348h1v1h-1zM649 348h1v1h-1zM610 329h1v1h-1zM609 330h1v1h-1zM611 330h1v1h-1zM607 331h1v1h-1zM608 331h1v1h-1zM612 331h1v1h-1zM606 332h1v1h-1zM613 332h1v1h-1zM605 333h1v1h-1zM614 333h1v1h-1zM615 334h1v1h-1zM668 329h1v1h-1zM667 330h1v1h-1zM669 330h1v1h-1zM665 331h1v1h-1zM666 331h1v1h-1zM670 331h1v1h-1zM664 332h1v1h-1zM671 332h1v1h-1zM663 333h1v1h-1zM672 333h1v1h-1zM673 334h1v1h-1zM721 299h1v1h-1zM720 300h1v1h-1zM722 300h1v1h-1zM718 301h1v1h-1zM719 301h1v1h-1zM723 301h1v1h-1zM717 302h1v1h-1zM724 302h1v1h-1zM716 303h1v1h-1zM725 303h1v1h-1zM726 304h1v1h-1zM721 360h1v1h-1zM719 361h1v1h-1zM720 361h1v1h-1zM722 361h1v1h-1zM718 362h1v1h-1zM723 362h1v1h-1zM724 362h1v1h-1zM716 363h1v1h-1zM717 363h1v1h-1zM725 363h1v1h-1zM726 364h1v1h-1zM702 311h1v1h-1zM703 312h1v1h-1zM704 312h1v1h-1zM705 313h1v1h-1zM706 314h1v1h-1zM705 315h1v1h-1zM704 316h1v1h-1zM703 317h1v1h-1zM702 318h1v1h-1zM701 319h1v1h-1zM736 314h1v1h-1zM737 313h1v1h-1zM738 312h1v1h-1zM739 312h1v1h-1zM740 311h1v1h-1zM741 310h1v1h-1zM737 315h1v1h-1zM738 316h1v1h-1zM739 317h1v1h-1zM740 318h1v1h-1zM707 344h1v1h-1zM708 343h1v1h-1zM709 342h1v1h-1zM710 342h1v1h-1zM711 341h1v1h-1zM712 340h1v1h-1zM706 345h1v1h-1zM707 346h1v1h-1zM708 346h1v1h-1zM709 347h1v1h-1zM710 348h1v1h-1zM711 348h1v1h-1zM736 345h1v1h-1zM735 344h1v1h-1zM734 343h1v1h-1zM733 342h1v1h-1zM732 342h1v1h-1zM731 341h1v1h-1zM735 346h1v1h-1zM734 346h1v1h-1zM733 347h1v1h-1zM732 348h1v1h-1zM731 348h1v1h-1zM692 329h1v1h-1zM691 330h1v1h-1zM693 330h1v1h-1zM689 331h1v1h-1zM690 331h1v1h-1zM694 331h1v1h-1zM688 332h1v1h-1zM695 332h1v1h-1zM687 333h1v1h-1zM696 333h1v1h-1zM697 334h1v1h-1zM750 329h1v1h-1zM749 330h1v1h-1zM751 330h1v1h-1zM747 331h1v1h-1zM748 331h1v1h-1zM752 331h1v1h-1zM746 332h1v1h-1zM753 332h1v1h-1zM745 333h1v1h-1zM754 333h1v1h-1zM755 334h1v1h-1z"/><g fill="#ff0080" font-family="Liberation Sans, sans-serif" font-size="13" stroke="#ff0080" stroke-width="0.35"><text x="410" y="173">1000.0</text><text x="319" y="203">500.0</text><text x="500" y="203">500.0</text><text x="228" y="233">500.0</text><text x="591" y="233">500.0</text><text x="181" y="263">250.0</text><text x="275" y="263">250.0</text><text x="544" y="263">250.0</text><text x="638" y="263">250.0</text><text x="410" y="504">1000.0</text><text x="319" y="474">500.0</text><text x="500" y="474">500.0</text><text x="228" y="444">500.0</text><text x="591" y="444">500.0</text><text x="181" y="414">250.0</text><text x="275" y="414">250.0</text><text x="544" y="414">250.0</text><text x="638" y="414">250.0</text><text x="134" y="278">250.0</text><text x="134" y="399">250.0</text><text x="114" y="293">125.0</text><text x="155" y="293">125.0</text><text x="114" y="384">125.0</text><text x="155" y="384">125.0</text><text x="93" y="308">125.0</text><text x="93" y="368">125.0</text><text x="78" y="323">62.5</text><text x="108" y="323">62.5</text><text x="78" y="353">62.5</text><text x="108" y="353">62.5</text><text x="64" y="338">62.5</text><text x="122" y="338">62.5</text><text x="175" y="308">125.0</text><text x="175" y="368">125.0</text><text x="160" y="323">62.5</text><text x="190" y="323">62.5</text><text x="160" y="353">62.5</text><text x="190" y="353">62.5</text><text x="146" y="338">62.5</text><text x="204" y="338">62.5</text><text x="322" y="278">250.0</text><text x="322" y="399">250.0</text><text x="302" y="293">125.0</text><text x="343" y="293">124.9</text><text x="302" y="384">125.0</text><text x="343" y="384">124.9</text><text x="281" y="308">125.0</text><text x="281" y="368">125.0</text><text x="266" y="323">62.5</text><text x="296" y="323">62.5</text><text x="266" y="353">62.5</text><text x="296" y="353">62.5</text><text x="252" y="338">62.5</text><text x="310" y="338">62.5</text><text x="363" y="308">124.9</text><text x="363" y="368">124.9</text><text x="348" y="323">62.5</text><text x="378" y="323">62.5</text><text x="348" y="353">62.5</text><text x="378" y="353">62.5</text><text x="334" y="338">62.5</text><text x="392" y="338">62.5</text><text x="497" y="278">250.0</text><text x="497" y="399">250.0</text><text x="477" y="293">125.0</text><text x="518" y="293">125.0</text><text x="477" y="384">125.0</text><text x="518" y="384">125.0</text><text x="456" y="308">125.0</text><text x="456" y="368">125.0</text><text x="441" y="323">62.5</text><text x="471" y="323">62.5</text><text x="441" y="353">62.5</text><text x="471" y="353">62.5</text><text x="427" y="338">62.5</text><text x="485" y="338">62.5</text><text x="538" y="308">125.0</text><text x="538" y="368">125.0</text><text x="523" y="323">62.5</text><text x="553" y="323">62.5</text><text x="523" y="353">62.5</text><text x="553" y="353">62.5</text><text x="509" y="338">62.5</text><text x="567" y="338">62.5</text><text x="685" y="278">250.0</text><text x="685" y="399">250.0</text><text x="665" y="293">125.0</text><text x="706" y="293">125.1</text><text x="665" y="384">125.0</text><text x="706" y="384">125.1</text><text x="644" y="308">125.0</text><text x="644" y="368">125.0</text><text x="629" y="323">62.5</text><text x="659" y="323">62.5</text><text x="629" y="353">62.5</text><text x="659" y="353">62.5</text><text x="615" y="338">62.5</text><text x="673" y="338">62.5</text><text x="726" y="308">125.1</text><text x="726" y="368">125.1</text><text x="711" y="323">62.5</text><text x="741" y="323">62.5</text><text x="711" y="353">62.5</text><text x="741" y="353">62.5</text><text x="697" y="338">62.5</text><text x="755" y="338">62.5</text></g><path fill="#000" d="M315 285h1v1h-1zM318 285h1v1h-1zM316 283h2v1h-2zM490 285h1v1h-1zM493 285h1v1h-1zM491 283h2v1h-2zM681 285h1v1h-1z"/></svg>

<!-- status bar -->
<div class="r" style="left:1px;top:574px;width:798px;height:25px;background:#f0f0f0"></div>
<div class="r" style="left:1px;top:574px;width:1px;height:25px;background:#fff"></div>
<div class="r" style="left:1px;top:598px;width:798px;height:1px;background:#fff"></div>
<!-- panels: top/left grey, bottom/right white -->
<div class="r" style="left:1px;top:576px;width:385px;height:22px;border-top:1px solid #a0a0a0;border-right:1px solid #fff;border-bottom:1px solid #fff;box-sizing:border-box"></div>
<div class="r" style="left:388px;top:576px;width:131px;height:23px;border-top:1px solid #a0a0a0;border-left:1px solid #a0a0a0;border-right:1px solid #fff;border-bottom:1px solid #fff;box-sizing:border-box"></div>
<div class="r" style="left:522px;top:576px;width:59px;height:23px;border-top:1px solid #a0a0a0;border-left:1px solid #a0a0a0;border-right:1px solid #fff;border-bottom:1px solid #fff;box-sizing:border-box"></div>
<div class="r" style="left:583px;top:576px;width:59px;height:23px;border-top:1px solid #a0a0a0;border-left:1px solid #a0a0a0;border-right:1px solid #fff;border-bottom:1px solid #fff;box-sizing:border-box"></div>
<div class="r" style="left:644px;top:576px;width:59px;height:23px;border-top:1px solid #a0a0a0;border-left:1px solid #a0a0a0;border-right:1px solid #fff;border-bottom:1px solid #fff;box-sizing:border-box"></div>
<div class="r" style="left:705px;top:576px;width:52px;height:23px;border-top:1px solid #a0a0a0;border-left:1px solid #a0a0a0;border-right:1px solid #fff;border-bottom:1px solid #fff;box-sizing:border-box"></div>
<div class="st" style="left:6px;transform:scaleX(0.887)">Plan - click mouse near centre of a pipe to review its information</div>
<div class="st" style="left:397px;transform:scaleX(0.925)">P:106 L:15 H:1 A:0.0m2</div>
<div class="st" style="left:537px">VIEW</div>
<div class="st" style="left:602px">SW</div>
<div class="st" style="left:659px;transform:scaleX(0.93)">[OFF]</div>
<div class="st" style="left:711px;transform:scaleX(0.93)">10 : 192</div>
<svg class="abs" style="left:758px;top:576px" width="20" height="23" viewBox="0 0 20 23">
  <rect x="2" y="1" width="15" height="21" fill="#f8f8f8"/>
  <ellipse cx="9.5" cy="11.5" rx="7.5" ry="10" fill="#b84210"/>
  <path d="M5 3.5q4.5-2 9 0" stroke="#e89080" stroke-width="1.5" fill="none"/>
  <path d="M6.5 6.5l6 10M12.5 6.5l-6 10" stroke="#fff" stroke-width="2.2"/>
</svg>
<svg class="abs" style="left:785px;top:586px" width="14" height="13" viewBox="0 0 14 13">
  <path d="M2 12L12 2M6 12L12 6M10 12L12 10" stroke="#a0a0a0" stroke-width="1.2"/>
</svg>
<div class="r" style="left:0;top:599px;width:530px;height:1px;background:#1a1a1a"></div>
<div class="r" style="left:530px;top:599px;width:125px;height:1px;background:#2b3f55"></div>
<div class="r" style="left:655px;top:599px;width:145px;height:1px;background:#a0a0a0"></div>
</body></html>
